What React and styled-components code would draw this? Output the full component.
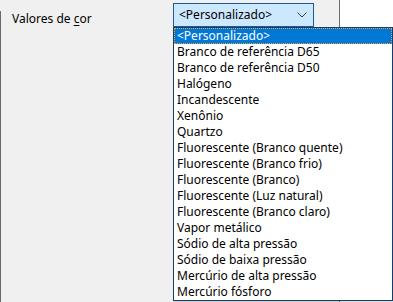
import React from 'react';
import styled, { createGlobalStyle } from 'styled-components';

const GlobalStyle = createGlobalStyle`
  html, body {
    margin: 0;
    padding: 0;
    background: #ffffff;
  }
  body {
    font-family: "Noto Sans", "Liberation Sans", sans-serif;
    font-size: 12px;
    color: #000000;
  }
`;

const options = [
  '<Personalizado>',
  'Branco de referência D65',
  'Branco de referência D50',
  'Halógeno',
  'Incandescente',
  'Xenônio',
  'Quartzo',
  'Fluorescente (Branco quente)',
  'Fluorescente (Branco frio)',
  'Fluorescente (Branco)',
  'Fluorescente (Luz natural)',
  'Fluorescente (Branco claro)',
  'Vapor metálico',
  'Sódio de alta pressão',
  'Sódio de baixa pressão',
  'Mercúrio de alta pressão',
  'Mercúrio fósforo',
];

const Screen = styled.div`
  position: relative;
  display: flex;
  width: 393px;
  height: 302px;
  overflow: hidden;
`;

const Panel = styled.div`
  position: relative;
  width: 339px;
  height: 100%;
  background: #f0f0f0;
  border-right: 1px solid #6e6e6e;

  &::before {
    content: '';
    position: absolute;
    left: 0;
    top: 11px;
    bottom: 0;
    width: 1px;
    background: #6b6b6b;
  }
`;

const Blank = styled.div`
  flex: 1;
  background: #ffffff;
`;

const FieldRow = styled.div`
  display: flex;
  align-items: flex-start;
  padding: 3px 0 0 12px;
`;

const Label = styled.label`
  width: 161px;
  padding-top: 8px;
  line-height: 16px;
  white-space: nowrap;

  u {
    text-decoration-thickness: 1px;
    text-underline-offset: 2px;
  }
`;

const Combo = styled.div`
  box-sizing: border-box;
  display: flex;
  align-items: center;
  justify-content: space-between;
  width: 141px;
  height: 24px;
  padding: 0 6px 0 5px;
  background: #cce8ff;
  border: 1px solid #1d5b96;
  line-height: 16px;
`;

const Chevron = () => (
  <svg width="10" height="6" viewBox="0 0 10 6">
    <path d="M0.5 0.5 L5 5 L9.5 0.5" fill="none" stroke="#3c3c3c" strokeWidth="1" />
  </svg>
);

const List = styled.ul`
  position: absolute;
  left: 173px;
  top: 27px;
  box-sizing: border-box;
  width: 220px;
  height: 274px;
  margin: 0;
  padding: 0;
  list-style: none;
  background: #ffffff;
  border: 1px solid #123e6e;
  box-shadow: 1px 2px 2px rgba(0, 0, 0, 0.15);
`;

const Item = styled.li`
  height: 16px;
  line-height: 16px;
  padding-left: 3px;
  white-space: nowrap;
  background: ${(p) => (p.$selected ? '#0078d7' : 'transparent')};
  color: ${(p) => (p.$selected ? '#ffffff' : '#000000')};
  outline: ${(p) => (p.$selected ? '1px dotted #ff9a2e' : 'none')};
  outline-offset: -1px;
`;

export default function App() {
  return (
    <>
      <GlobalStyle />
      <Screen>
        <Panel>
          <FieldRow>
            <Label>
              Valores de <u>c</u>or
            </Label>
            <Combo>
              <span>&lt;Personalizado&gt;</span>
              <Chevron />
            </Combo>
          </FieldRow>
        </Panel>
        <Blank />
        <List>
          {options.map((o, i) => (
            <Item key={o} $selected={i === 0}>
              {o}
            </Item>
          ))}
        </List>
      </Screen>
    </>
  );
}
